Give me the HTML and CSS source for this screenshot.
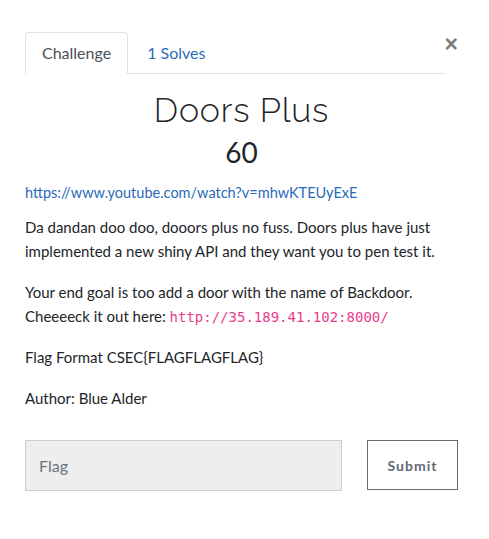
FILE: index.html
```html
<!DOCTYPE html>
<html>
<head>
<meta charset="utf-8">
<link rel="stylesheet" href="styles.css">
</head>
<body>
<div class="modal">
  <div class="head">
    <ul class="tabs">
      <li class="tab active">Challenge</li>
      <li class="tab link">1 Solves</li>
    </ul>
    <span class="close">&times;</span>
  </div>
  <h2 class="title">Doors Plus</h2>
  <h3 class="value">60</h3>
  <div class="desc">
    <p class="url"><a href="#">https://www.youtube.com/watch?v=mhwKTEUyExE</a></p>
    <p>Da dandan doo doo, dooors plus no fuss. Doors plus have just implemented a new shiny API and they want you to pen test it.</p>
    <p>Your end goal is too add a door with the name of Backdoor. Cheeeeck it out here: <code>http://35.189.41.102:8000/</code></p>
    <p>Flag Format CSEC{FLAGFLAGFLAG}</p>
    <p>Author: Blue Alder</p>
  </div>
  <div class="submit-row">
    <div class="flag-input">Flag</div>
    <button class="submit">Submit</button>
  </div>
</div>
</body>
</html>
```
FILE: styles.css
```css
html, body {
  margin: 0;
  padding: 0;
  background: #fff;
}
body {
  font-family: Lato, "Open Sans", sans-serif;
  color: #212529;
}
.modal {
  padding: 32px 31px 0 25px;
}
.head {
  display: flex;
  align-items: flex-start;
}
.tabs {
  list-style: none;
  margin: 0;
  padding: 0;
  width: 420px;
  display: flex;
  border-bottom: 1px solid #dee2e6;
  height: 41px;
}
.tab {
  font-size: 16px;
  line-height: 22px;
  padding: 9px 16px 9px 16px;
  margin-bottom: -1px;
  border: 1px solid transparent;
  border-radius: 4px 4px 0 0;
}
.tab.active {
  color: #495057;
  border-color: #dee2e6 #dee2e6 #fff;
  background: #fff;
}
.tab.link {
  color: #2a6bb8;
  padding-left: 18px;
}
.close {
  margin-left: auto;
  margin-top: 1px;
  font-family: "Liberation Sans", Arial, sans-serif;
  font-weight: bold;
  font-size: 23px;
  line-height: 22px;
  color: #7d7d7d;
}
.title {
  margin: 16px 0 0;
  text-align: center;
  font-family: Raleway, "Open Sans", sans-serif;
  font-weight: 300;
  font-size: 34px;
  line-height: 40px;
  letter-spacing: 0.8px;
}
.value {
  margin: 4px 0 0;
  text-align: center;
  font-size: 28px;
  font-weight: 400;
  line-height: 36px;
}
.desc {
  margin-top: 11px;
  font-size: 15px;
  line-height: 24px;
}
.desc p {
  margin: 0 0 17px;
}
.desc .url {
  font-size: 14.5px;
  margin-bottom: 10px;
}
.desc a {
  color: #2a6bb8;
  text-decoration: none;
}
code {
  font-family: "DejaVu Sans Mono", monospace;
  font-size: 14px;
  line-height: 20px;
  color: #e83e8c;
}
.submit-row {
  display: flex;
  align-items: flex-start;
  margin-top: 30px;
  gap: 25px;
}
.flag-input {
  box-sizing: border-box;
  width: 317px;
  height: 51px;
  background: #eeeeee;
  border: 1px solid #c9cfd6;
  padding: 13px 13px;
  font-size: 16px;
  line-height: 24px;
  color: #6c757d;
}
.submit {
  box-sizing: border-box;
  width: 91px;
  height: 50px;
  background: #fff;
  border: 1px solid #5f6a75;
  font-family: Lato, sans-serif;
  font-weight: bold;
  font-size: 14px;
  letter-spacing: 1px;
  color: #5f6a75;
  padding: 0;
}
```
